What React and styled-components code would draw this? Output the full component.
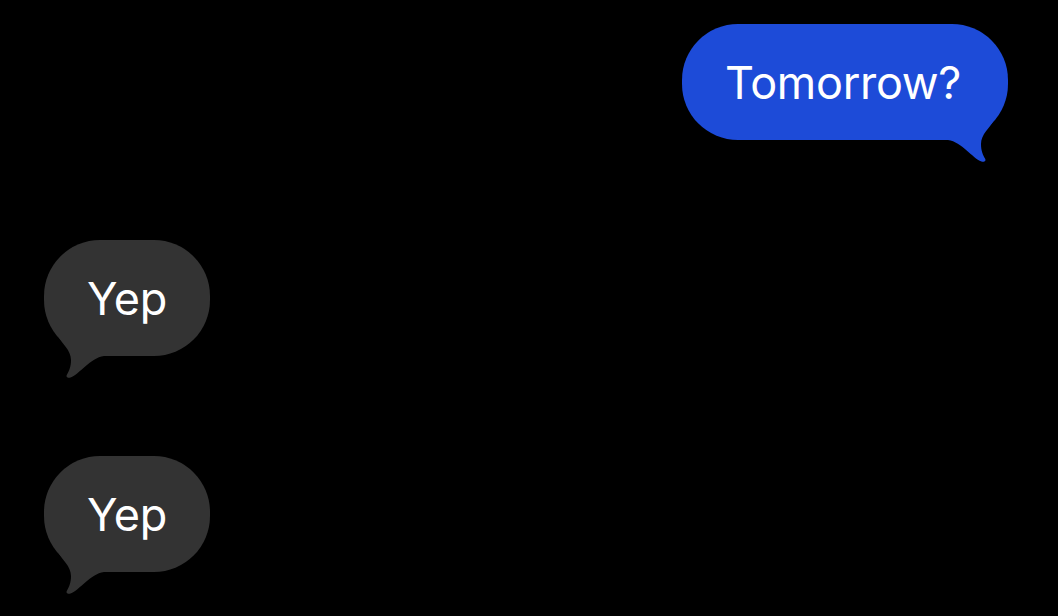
import React from "react";
import styled, { createGlobalStyle } from "styled-components";

const Global = createGlobalStyle`
  html, body { margin: 0; padding: 0; background: #000; }
  body { width: 1058px; height: 616px; overflow: hidden; font-family: Inter, "Liberation Sans", sans-serif; }
`;

const Thread = styled.div`
  display: flex;
  flex-direction: column;
  gap: 100px;
  padding: 24px 50px 0 44px;
  height: 616px;
  box-sizing: border-box;
  background: #000;
`;

const Row = styled.div`
  display: flex;
  justify-content: ${(p) => (p.$out ? "flex-end" : "flex-start")};
`;

const Bubble = styled.div`
  position: relative;
  display: inline-flex;
  align-items: center;
  height: 116px;
  padding: ${(p) => (p.$out ? "0 47px 0 43px" : "0 43px")};
  box-sizing: border-box;
  border-radius: 56px;
  background: ${(p) => (p.$out ? "#1d4bd8" : "#333333")};
  color: #ffffff;
  font-size: 45px;
  font-weight: 400;
  letter-spacing: -0.3px;
  line-height: 1;
`;

const Tail = styled.svg`
  position: absolute;
  bottom: -24px;
  width: 60px;
  height: 44px;
  ${(p) => (p.$out ? "right: 0;" : "left: 0; transform: scaleX(-1);")}
`;

function BubbleTail({ out }) {
  return (
    <Tail $out={out} viewBox="0 0 60 44">
      <path
        d="M0 0 L46 0 C42 8 33 14 33 24 C33 31 35 35 37 38.5 C38.5 41 36 42.5 33.5 41.5 C24 38 14 22 0 20 Z"
        fill={out ? "#1d4bd8" : "#333333"}
      />
    </Tail>
  );
}

function Message({ out, children }) {
  return (
    <Row $out={out}>
      <Bubble $out={out}>
        {children}
        <BubbleTail out={out} />
      </Bubble>
    </Row>
  );
}

export default function App() {
  return (
    <>
      <Global />
      <Thread>
        <Message out>Tomorrow?</Message>
        <Message>Yep</Message>
        <Message>Yep</Message>
      </Thread>
    </>
  );
}
